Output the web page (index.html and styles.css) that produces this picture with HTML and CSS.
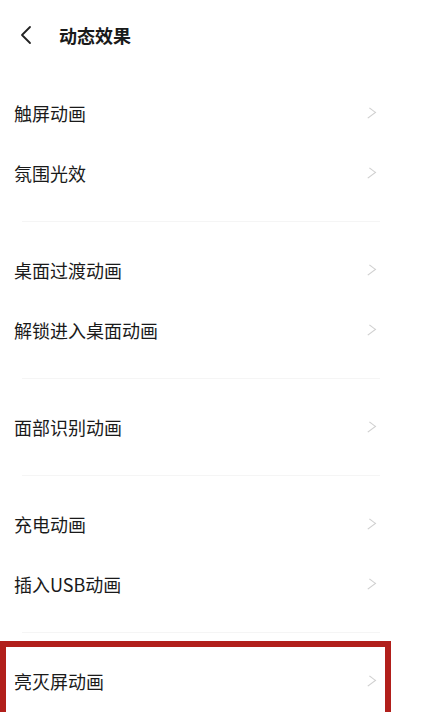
FILE: index.html
```html
<!DOCTYPE html>
<html lang='zh-CN'>
<head>
<meta charset='UTF-8'>
<meta name='viewport' content='width=device-width, initial-scale=1.0'>
<title>动态效果</title>
<link rel="stylesheet" href="styles.css">
</head>
<body>
  <header class='topbar'>
    <svg class='back' viewBox='0 0 14 20' width='14' height='20'>
      <path d='M11 2 L3 10 L11 18' fill='none' stroke='#222' stroke-width='1.8' stroke-linecap='round' stroke-linejoin='round'/>
    </svg>
    <h1>动态效果</h1>
  </header>

  <main class='settings'>
    <!-- ---------- GROUP 1 ---------- -->
    <section class='group'>
      <div class='row'><span>触屏动画</span><i class='chev'></i></div>
      <div class='row'><span>氛围光效</span><i class='chev'></i></div>
    </section>
    <div class='divider'></div>

    <!-- ---------- GROUP 2 ---------- -->
    <section class='group'>
      <div class='row'><span>桌面过渡动画</span><i class='chev'></i></div>
      <div class='row'><span>解锁进入桌面动画</span><i class='chev'></i></div>
    </section>
    <div class='divider'></div>

    <!-- ---------- GROUP 3 ---------- -->
    <section class='group'>
      <div class='row'><span>面部识别动画</span><i class='chev'></i></div>
    </section>
    <div class='divider'></div>

    <!-- ---------- GROUP 4 ---------- -->
    <section class='group'>
      <div class='row'><span>充电动画</span><i class='chev'></i></div>
      <div class='row'><span>插入USB动画</span><i class='chev'></i></div>
    </section>
    <div class='divider'></div>

    <!-- ---------- GROUP 5 ---------- -->
    <section class='group'>
      <div class='row highlighted'><span>亮灭屏动画</span><i class='chev'></i></div>
    </section>
  </main>
</body>
</html>
```

FILE: styles.css
```css
/* ---------- GLOBAL ---------- */
*,*::before,*::after{box-sizing:border-box;margin:0;padding:0;}
body{
  font-family:'Noto Sans CJK SC','Noto Sans',sans-serif;
  background:#fff;color:#1a1a1a;width:432px;height:712px;overflow:hidden;
}
/* ---------- HEADER ---------- */
.topbar{
  height:70px;display:flex;align-items:center;padding-left:19px;gap:26px;
}
.back{display:block;}
.topbar h1{font-size:18px;font-weight:600;}
/* ---------- LIST ---------- */
.settings{margin-top:13px;}
.row{
  height:60px;display:flex;align-items:center;justify-content:space-between;
  padding:0 55px 0 14px;font-size:18px;font-weight:400;position:relative;
}
.chev{
  width:8px;height:10px;border-top:1.5px solid #d0d0d0;border-right:1.5px solid #d0d0d0;
  transform:rotate(45deg) skew(-8deg,-8deg);display:block;margin-right:4px;
}
.divider{height:37px;display:flex;align-items:center;padding:0 52px 0 22px;}
.divider::after{content:'';display:block;height:1px;width:100%;background:#f5f5f5;}
/* Red annotation frame */
.highlighted::after{
  content:'';position:absolute;left:0;top:-10px;width:391px;height:80px;
  border:6px solid #b11f1b;
}
```
